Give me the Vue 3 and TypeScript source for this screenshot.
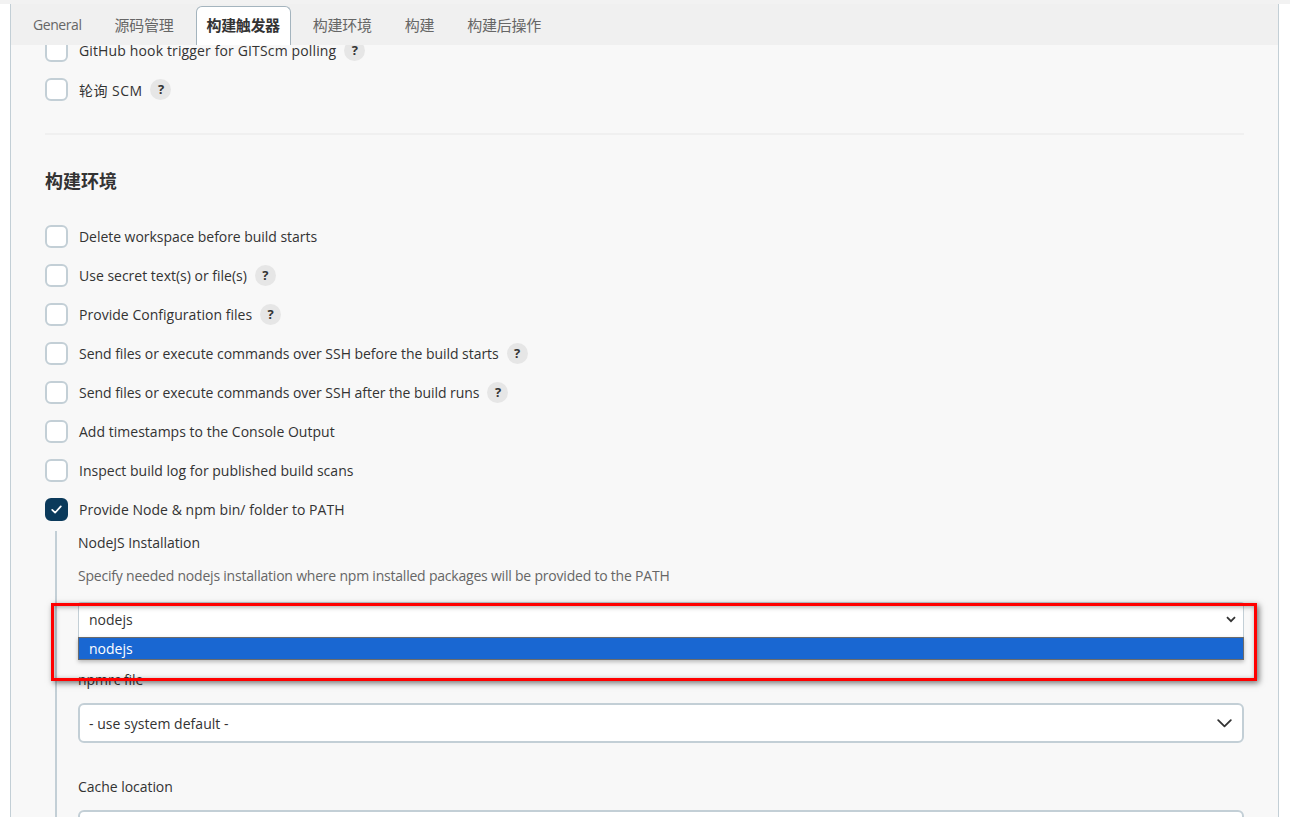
<script setup lang="ts">
interface Row { label: string; help?: boolean; checked?: boolean; spacing?: number }
const tabs = ['General', '源码管理', '构建触发器', '构建环境', '构建', '构建后操作']
const triggerRows: Row[] = [
  { label: 'GitHub hook trigger for GITScm polling', help: true, spacing: 0.14 },
  { label: '轮询 SCM', help: true, spacing: 0.46 },
]
const envRows: Row[] = [
  { label: 'Delete workspace before build starts', spacing: -0.04 },
  { label: 'Use secret text(s) or file(s)', help: true },
  { label: 'Provide Configuration files', help: true, spacing: 0.03 },
  { label: 'Send files or execute commands over SSH before the build starts', help: true, spacing: -0.04 },
  { label: 'Send files or execute commands over SSH after the build runs', help: true, spacing: -0.04 },
  { label: 'Add timestamps to the Console Output', spacing: 0.02 },
  { label: 'Inspect build log for published build scans', spacing: 0.01 },
  { label: 'Provide Node & npm bin/ folder to PATH', checked: true, spacing: 0.04 },
]
</script>

<template>
  <div class="page">
    <div class="panel">
      <nav class="tabbar">
        <div v-for="t in tabs" :key="t" class="tab" :class="{ active: t === '构建触发器', latin: t === 'General' }">{{ t }}</div>
      </nav>
      <main class="content">
        <div class="rows">
          <div v-for="r in triggerRows" :key="r.label" class="row">
            <span class="box"></span>
            <span class="label" :style="{ letterSpacing: (r.spacing ?? 0) + 'px' }">{{ r.label }}</span>
            <span v-if="r.help" class="help">?</span>
          </div>
        </div>
        <hr class="divider" />
        <h2 class="heading">构建环境</h2>
        <div class="rows">
          <div v-for="r in envRows" :key="r.label" class="row">
            <span class="box" :class="{ checked: r.checked }">
              <svg v-if="r.checked" width="13" height="13" viewBox="0 0 13 13" fill="none">
                <path d="M2.2 6.8 5.1 9.7 10.8 3.4" stroke="#fff" stroke-width="1.7" stroke-linecap="round" stroke-linejoin="round" />
              </svg>
            </span>
            <span class="label" :style="{ letterSpacing: (r.spacing ?? 0) + 'px' }">{{ r.label }}</span>
            <span v-if="r.help" class="help">?</span>
          </div>
        </div>
        <section class="nested">
          <div class="field-label first">NodeJS Installation</div>
          <div class="desc">Specify needed nodejs installation where npm installed packages will be provided to the PATH</div>
          <div class="open-select">
            <div class="native">
              <span>nodejs</span>
              <svg width="10" height="7" viewBox="0 0 10 7" fill="none">
                <path d="M1 1.2 5 5.2 9 1.2" stroke="#333" stroke-width="1.8" />
              </svg>
            </div>
            <div class="menu">nodejs</div>
          </div>
          <div class="field-label npmrc">npmrc file</div>
          <div class="select">
            <span>- use system default -</span>
            <svg width="15" height="9" viewBox="0 0 15 9" fill="none">
              <path d="M1.2 1.2 7.5 7.4 13.8 1.2" stroke="#333" stroke-width="1.8" stroke-linecap="round" stroke-linejoin="round" />
            </svg>
          </div>
          <div class="field-label cache">Cache location</div>
          <div class="input"></div>
        </section>
      </main>
      <div class="callout"></div>
    </div>
  </div>
</template>

<style>
html, body { margin: 0; background: #fff; overflow: hidden; }
</style>

<style scoped>
.page {
  position: relative;
  width: 1290px;
  height: 817px;
  overflow: hidden;
  background: #fff;
  padding: 4px 11px 0 10px;
  box-sizing: border-box;
  font-family: "Open Sans", "Noto Sans CJK SC", sans-serif;
  font-size: 14px;
  color: #333;
}
.page::before {
  content: "";
  position: absolute;
  left: 0;
  right: 0;
  top: 0;
  height: 4px;
  background: #f2f2f2;
}
.panel {
  height: 100%;
  background: #f8f8f8;
  border-left: 1px solid #c3cfd6;
  border-right: 1px solid #c3cfd6;
}
.tabbar {
  position: absolute;
  z-index: 2;
  left: 11px;
  right: 12px;
  top: 4px;
  height: 41px;
  box-sizing: border-box;
  background: #f0f0f0;
  display: flex;
  align-items: flex-end;
  gap: 11px;
  padding-left: 11px;
}
.tab {
  height: 39px;
  box-sizing: border-box;
  padding: 0 11px;
  line-height: 38px;
  color: #666;
  white-space: nowrap;
  font-size: 15px;
  letter-spacing: -0.25px;
}
.tab.latin {
  font-size: 14px;
  letter-spacing: -0.42px;
}
.tab.active {
  padding: 0 10px;
  background: #fff;
  color: #333;
  font-weight: 700;
  border: 1px solid #a4b4be;
  border-bottom: 0;
  border-radius: 6px 6px 0 0;
  line-height: 37px;
  letter-spacing: -0.4px;
}
.content {
  padding: 35px 34px 0;
}
.rows {
  display: flex;
  flex-direction: column;
  gap: 16px;
}
.row {
  display: flex;
  align-items: center;
  height: 23px;
}
.box {
  width: 23px;
  height: 23px;
  box-sizing: border-box;
  border: 2px solid #c3cfd6;
  border-radius: 6px;
  background: #fff;
  margin-right: 11px;
  display: flex;
  align-items: center;
  justify-content: center;
  flex: none;
}
.box.checked {
  background: #0b3a5b;
  border-color: #0b3a5b;
}
.label {
  white-space: nowrap;
}
.help {
  width: 21px;
  height: 21px;
  margin-left: 8px;
  border-radius: 50%;
  background: #e6e6e6;
  font-size: 13px;
  font-weight: 700;
  line-height: 21px;
  text-align: center;
  color: #333;
}
.divider {
  border: 0;
  height: 2px;
  background: #f0f0f0;
  margin: 32px 0 0;
}
.heading {
  margin: 31px 0 0;
  height: 30px;
  font-size: 18px;
  line-height: 30px;
  font-weight: 700;
  color: #333;
}
.heading + .rows {
  margin-top: 29px;
}
.nested {
  margin: 10px 0 0 10px;
  border-left: 2px solid #c3cfd6;
  padding-left: 21px;
  height: 400px;
}
.field-label {
  line-height: 22px;
  letter-spacing: -0.04px;
  color: #333;
}
.field-label.first {
  padding-top: 1px;
}
.desc {
  margin-top: 11px;
  line-height: 22px;
  color: #666;
  letter-spacing: -0.21px;
}
.open-select {
  position: relative;
  margin-top: 15px;
  height: 35px;
}
.native {
  height: 35px;
  box-sizing: border-box;
  background: #fff;
  border: 1px solid #c3cfd6;
  border-bottom: 0;
  border-radius: 3px 3px 0 0;
  padding: 0 7px 2px 10px;
  display: flex;
  align-items: center;
  justify-content: space-between;
}
.menu {
  position: absolute;
  z-index: 1;
  left: 0;
  right: 0;
  top: 35px;
  height: 23px;
  box-sizing: border-box;
  padding-left: 10px;
  background: #1967d2;
  border: 1px solid #6b6b6b;
  color: #fff;
  line-height: 21px;
  box-shadow: 0 2px 4px rgba(0, 0, 0, 0.25);
}
.npmrc {
  margin-top: 32px;
}
.select {
  margin-top: 12px;
  height: 40px;
  box-sizing: border-box;
  background: #fff;
  border: 2px solid #c3cfd6;
  border-radius: 6px;
  padding: 0 10px 0 9px;
  display: flex;
  align-items: center;
  justify-content: space-between;
  letter-spacing: 0.03px;
}
.cache {
  margin-top: 33px;
}
.input {
  margin-top: 12px;
  height: 40px;
  box-sizing: border-box;
  background: #fff;
  border: 2px solid #c3cfd6;
  border-radius: 6px;
}
.callout {
  position: absolute;
  z-index: 3;
  left: 51px;
  top: 603px;
  width: 1206px;
  height: 78px;
  box-sizing: border-box;
  border: 3.5px solid #f00;
  box-shadow: 2px 2px 6px rgba(0, 0, 0, 0.55), inset 1px 1px 5px rgba(0, 0, 0, 0.35);
}
</style>
